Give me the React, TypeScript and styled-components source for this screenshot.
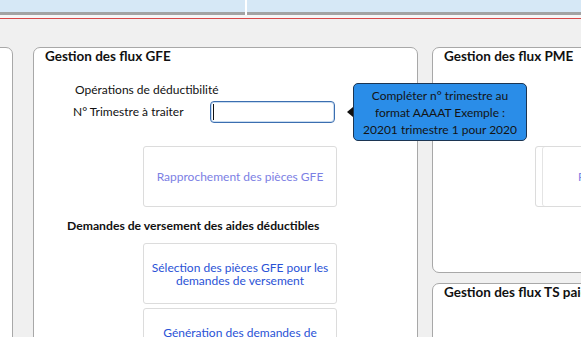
import styled, { createGlobalStyle } from "styled-components";

const GlobalStyle = createGlobalStyle`
  html, body {
    margin: 0;
    padding: 0;
    background: #f0f0f0;
    overflow: hidden;
  }
  body {
    font-family: Lato, "Open Sans", sans-serif;
    color: #111;
  }
`;

export default function App() {
  return (
    <>
      <GlobalStyle />
      <Page>
        <TabBar>
          <Tab $width={245} />
          <Tab />
        </TabBar>
        <RedRule />

        <PanelsRow>
          <Panel $width={32} $height={320} $offset={-19} />

          <Panel $width={385} $height={320} $offset={20} $raised>
            <PanelTitle>Gestion des flux GFE</PanelTitle>
            <PanelBody>
              <SubLabel>Opérations de déductibilité</SubLabel>
              <FieldRow>
                <FieldLabel>N° Trimestre à traiter</FieldLabel>
                <InputWrap>
                  <TextInput defaultValue="" />
                  <Caret />
                  <Tooltip>
                    Compléter n° trimestre au
                    <br />
                    format AAAAT Exemple :
                    <br />
                    20201 trimestre 1 pour 2020
                  </Tooltip>
                </InputWrap>
              </FieldRow>

              <ActionButton $muted $top={23}>Rapprochement des pièces GFE</ActionButton>

              <SectionHeading>Demandes de versement des aides déductibles</SectionHeading>

              <ActionButton $top={10}>
                Sélection des pièces GFE pour les
                <br />
                demandes de versement
              </ActionButton>
              <ActionButton $top={4}>
                Génération des demandes de
                <br />
                versement
              </ActionButton>
            </PanelBody>
          </Panel>

          <RightColumn>
            <Panel $width={220} $height={226} $offset={0}>
              <PanelTitle>Gestion des flux PME</PanelTitle>
              <PmeButton>
                <PmeButtonText>Rapprochement</PmeButtonText>
              </PmeButton>
            </Panel>
            <Panel $width={220} $height={120} $offset={0}>
              <PanelTitle>Gestion des flux TS paiement</PanelTitle>
            </Panel>
          </RightColumn>
        </PanelsRow>
      </Page>
    </>
  );
}

const Page = styled.div`
  width: 581px;
  height: 337px;
  overflow: hidden;
`;

const TabBar = styled.div`
  display: flex;
  gap: 2px;
  height: 15px;
  background: #ffffff;
`;

const Tab = styled.div<{ $width?: number }>`
  box-sizing: border-box;
  height: 15px;
  ${(p) => (p.$width ? `width: ${p.$width}px; flex-shrink: 0;` : "flex: 1;")}
  background: #d6e8f6;
  border-bottom: 3px solid #a3a3a3;
`;

const RedRule = styled.div`
  height: 3px;
  background: #f6f6f6;
  border-bottom: 1px solid #d84848;
`;

const PanelsRow = styled.div`
  display: flex;
  align-items: flex-start;
  padding-top: 28px;
`;

const Panel = styled.section<{ $width: number; $height: number; $offset: number; $raised?: boolean }>`
  box-sizing: border-box;
  flex-shrink: 0;
  width: ${(p) => p.$width}px;
  height: ${(p) => p.$height}px;
  margin-left: ${(p) => p.$offset}px;
  background: #ffffff;
  border: 1px solid #a8a8a8;
  border-radius: 7px;
  position: relative;
  z-index: ${(p) => (p.$raised ? 2 : 1)};
`;

const RightColumn = styled.div`
  display: flex;
  flex-direction: column;
  gap: 10px;
  margin-left: 14px;
`;

const PanelTitle = styled.h2`
  margin: 0;
  padding: 1px 0 0 11px;
  font-size: 13.5px;
  line-height: 14px;
  font-weight: 700;
  color: #111;
  white-space: nowrap;
`;

const PanelBody = styled.div`
  display: flex;
  flex-direction: column;
  align-items: flex-start;
  padding-top: 20px;
`;

const SubLabel = styled.div`
  margin-left: 41px;
  font-size: 12px;
  line-height: 14px;
  color: #111;
`;

const FieldRow = styled.div`
  display: flex;
  align-items: center;
  margin-top: 4px;
  padding-left: 39px;
`;

const FieldLabel = styled.label`
  width: 137px;
  font-size: 12px;
  line-height: 14px;
  color: #111;
`;

const InputWrap = styled.div`
  position: relative;
  display: flex;
`;

const TextInput = styled.input`
  box-sizing: border-box;
  width: 125px;
  height: 22px;
  margin: 0;
  padding: 0 4px;
  border: 1px solid #3b6eb0;
  border-radius: 4px;
  box-shadow: inset 0 0 0 1px #c9dcf0;
  background: #fff;
  outline: none;
  font-family: Lato, sans-serif;
  font-size: 12px;
`;

const Caret = styled.span`
  position: absolute;
  left: 3px;
  top: 3px;
  width: 1px;
  height: 16px;
  background: #111;
`;

const Tooltip = styled.div`
  position: absolute;
  z-index: 5;
  left: 143px;
  top: -18px;
  box-sizing: border-box;
  width: 174px;
  height: 58px;
  padding-top: 3px;
  background: #2a8de8;
  border: 1px solid #1c3552;
  border-radius: 5px;
  font-size: 12px;
  line-height: 17px;
  text-align: center;
  color: #141414;
  white-space: nowrap;

  &::before {
    content: "";
    position: absolute;
    left: -7px;
    top: 23px;
    border-style: solid;
    border-width: 5px 6px 5px 0;
    border-color: transparent #111 transparent transparent;
  }
`;

const ActionButton = styled.button<{ $muted?: boolean; $top: number }>`
  box-sizing: border-box;
  width: 194px;
  height: 61px;
  margin: ${(p) => p.$top}px 0 0 109px;
  padding: 0;
  background: #ffffff;
  border: 1px solid #dcdcdc;
  border-radius: 3px;
  font-family: Lato, sans-serif;
  font-size: 12px;
  line-height: 13px;
  text-align: center;
  color: ${(p) => (p.$muted ? "#7c80e4" : "#2a52d6")};
  cursor: pointer;
`;

const SectionHeading = styled.h3`
  margin: 12px 0 0 33px;
  font-size: 12.2px;
  line-height: 14px;
  font-weight: 700;
  color: #111;
  white-space: nowrap;
`;

const PmeButton = styled.div`
  position: absolute;
  left: 102px;
  top: 98px;
  box-sizing: border-box;
  width: 200px;
  height: 61px;
  background: #fff;
  border: 1px solid #dcdcdc;
  border-radius: 3px;
  box-shadow: inset 6px 0 0 #fff, inset 7px 0 0 #e4e4e4;
  display: flex;
  align-items: center;
  padding-left: 42px;
`;

const PmeButtonText = styled.span`
  font-size: 12px;
  color: #7c80e4;
  white-space: nowrap;
`;
